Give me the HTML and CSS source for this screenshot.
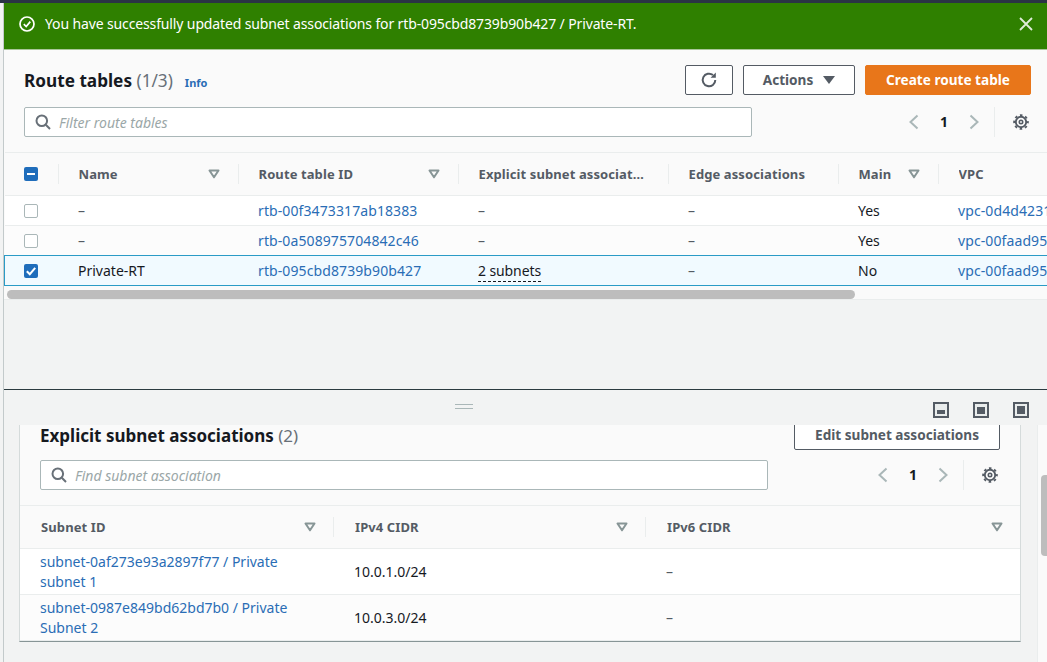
FILE: index.html
```html
<!DOCTYPE html>
<html lang="en">
<head>
  <meta charset="UTF-8" />
  <title>Route tables</title>
  <link rel="stylesheet" href="styles.css">
</head>
<body>
  <svg class="sprites" width="0" height="0">
    <symbol id="i-search" viewBox="0 0 16 16"><circle cx="6.8" cy="6.8" r="5.3" fill="none" stroke="currentColor" stroke-width="2"/><path d="M10.8 10.8 15 15" fill="none" stroke="currentColor" stroke-width="2"/></symbol>
    <symbol id="i-left" viewBox="0 0 16 16"><path d="M11.5 1.5 4.5 8l7 6.5" fill="none" stroke="currentColor" stroke-width="2"/></symbol>
    <symbol id="i-right" viewBox="0 0 16 16"><path d="M4.5 1.5 11.5 8l-7 6.5" fill="none" stroke="currentColor" stroke-width="2"/></symbol>
    <symbol id="i-gear" viewBox="0 0 16 16"><circle cx="8" cy="8" r="5.200" fill="none" stroke="currentColor" stroke-width="1.900"/><circle cx="8" cy="8" r="6.900" fill="none" stroke="currentColor" stroke-width="1.800" stroke-dasharray="2.600 2.820" stroke-dashoffset="1.300"/><circle cx="8" cy="8" r="1.700" fill="none" stroke="currentColor" stroke-width="1.600"/></symbol>
    <symbol id="i-sort" viewBox="0 0 12 10"><path d="M1.500 1.500h9L6 8.300z" fill="none" stroke="currentColor" stroke-width="2" stroke-linejoin="round"/></symbol>
  </svg>

  <div class="top-line"></div>

  <div class="app">
    <div class="flash">
      <svg class="flash-icon" width="16" height="16" viewBox="0 0 16 16"><circle cx="8" cy="8" r="7" fill="none" stroke="#fff" stroke-width="1.700"/><path d="M4.800 8.200 7.200 10.500 11.300 5.600" fill="none" stroke="#fff" stroke-width="1.700"/></svg>
      <span class="flash-text">You have successfully updated subnet associations for rtb-095cbd8739b90b427 / Private-RT.</span>
      <svg class="flash-close" width="14" height="14" viewBox="0 0 14 14"><path d="M1 1l12 12M13 1 1 13" stroke="#fff" stroke-opacity=".85" stroke-width="1.800" fill="none"/></svg>
    </div>

    <section class="upper">
      <div class="tools">
        <div class="title-row">
          <h1 class="title">Route tables <span class="count">(1/3)</span></h1>
          <a class="info">Info</a>
          <div class="actions">
            <button class="btn btn-icon">
              <svg width="18" height="18" viewBox="0 0 18 18"><path d="M15.300 9A6.300 6.300 0 1 1 13 4.100" fill="none" stroke="#545b64" stroke-width="2"/><path d="M15.800 1.500v5.200h-5.200z" fill="#545b64"/></svg>
            </button>
            <button class="btn btn-actions">Actions <span class="caret"></span></button>
            <button class="btn btn-primary">Create route table</button>
          </div>
        </div>
        <div class="filter-row">
          <div class="search search-wide">
            <svg class="search-icon" width="16" height="16"><use href="#i-search"/></svg>
            <span class="placeholder">Filter route tables</span>
          </div>
          <div class="pager">
            <svg class="chev" width="16" height="16"><use href="#i-left"/></svg>
            <span class="page">1</span>
            <svg class="chev" width="16" height="16"><use href="#i-right"/></svg>
            <span class="pager-sep"><svg class="gear" width="16" height="16"><use href="#i-gear"/></svg></span>
          </div>
        </div>
      </div>

      <table class="rt-table">
        <colgroup><col class="c-check"><col class="c-name"><col class="c-id"><col class="c-assoc"><col class="c-edge"><col class="c-main"><col class="c-vpc"></colgroup>
        <thead>
          <tr>
            <th><div class="th-in th-check"><span class="box box-on"><svg width="14" height="14" viewBox="0 0 14 14"><path d="M3 7h8" stroke="#fff" stroke-width="2"/></svg></span></div></th>
            <th><div class="th-in"><span class="th-label">Name</span><svg class="sort" width="12" height="10"><use href="#i-sort"/></svg></div></th>
            <th><div class="th-in"><span class="th-label">Route table ID</span><svg class="sort" width="12" height="10"><use href="#i-sort"/></svg></div></th>
            <th><div class="th-in th-long"><span class="th-label">Explicit subnet associations</span></div></th>
            <th><div class="th-in"><span class="th-label">Edge associations</span></div></th>
            <th><div class="th-in"><span class="th-label">Main</span><svg class="sort" width="12" height="10"><use href="#i-sort"/></svg></div></th>
            <th><div class="th-in th-last"><span class="th-label">VPC</span></div></th>
          </tr>
        </thead>
        <tbody>
          <tr>
            <td><span class="box"></span></td>
            <td class="dash">–</td>
            <td><a class="link">rtb-00f3473317ab18383</a></td>
            <td class="dash">–</td>
            <td class="dash">–</td>
            <td>Yes</td>
            <td><a class="link">vpc-0d4d42311c5e8a7f2</a></td>
          </tr>
          <tr class="alt before-selected">
            <td><span class="box"></span></td>
            <td class="dash">–</td>
            <td><a class="link">rtb-0a508975704842c46</a></td>
            <td class="dash">–</td>
            <td class="dash">–</td>
            <td>Yes</td>
            <td><a class="link">vpc-00faad95b2c1d3e47</a></td>
          </tr>
          <tr class="selected">
            <td><span class="box box-on"><svg width="14" height="14" viewBox="0 0 14 14"><path d="M2.800 7.200 5.800 10.200 11.200 3.800" fill="none" stroke="#fff" stroke-width="2"/></svg></span></td>
            <td>Private-RT</td>
            <td><a class="link">rtb-095cbd8739b90b427</a></td>
            <td><span class="popover">2 subnets</span></td>
            <td class="dash">–</td>
            <td>No</td>
            <td><a class="link">vpc-00faad95b2c1d3e47</a></td>
          </tr>
        </tbody>
      </table>
      <div class="h-track"><div class="h-thumb"></div></div>
    </section>

    <div class="upper-gap"></div>

    <section class="split">
      <div class="split-head">
        <div class="handle"></div>
        <div class="split-icons">
          <span class="pos pos-low"></span>
          <span class="pos pos-mid"></span>
          <span class="pos pos-full"></span>
        </div>
      </div>

      <div class="split-body">
        <div class="pane">
          <div class="card">
            <div class="card-title-row">
              <h2 class="card-title">Explicit subnet associations <span class="count">(2)</span></h2>
              <button class="btn btn-edit">Edit subnet associations</button>
            </div>
            <div class="filter-row card-filter">
              <div class="search search-card">
                <svg class="search-icon" width="16" height="16"><use href="#i-search"/></svg>
                <span class="placeholder">Find subnet association</span>
              </div>
              <div class="pager">
                <svg class="chev" width="16" height="16"><use href="#i-left"/></svg>
                <span class="page">1</span>
                <svg class="chev" width="16" height="16"><use href="#i-right"/></svg>
                <span class="pager-sep"><svg class="gear" width="16" height="16"><use href="#i-gear"/></svg></span>
              </div>
            </div>

            <table class="sub-table">
              <colgroup><col class="s-id"><col class="s-v4"><col class="s-v6"></colgroup>
              <thead>
                <tr>
                  <th><div class="th-in"><span class="th-label">Subnet ID</span><svg class="sort" width="12" height="10"><use href="#i-sort"/></svg></div></th>
                  <th><div class="th-in"><span class="th-label">IPv4 CIDR</span><svg class="sort" width="12" height="10"><use href="#i-sort"/></svg></div></th>
                  <th><div class="th-in th-last"><span class="th-label">IPv6 CIDR</span><svg class="sort" width="12" height="10"><use href="#i-sort"/></svg></div></th>
                </tr>
              </thead>
              <tbody>
                <tr>
                  <td><a class="link">subnet-0af273e93a2897f77 / Private subnet 1</a></td>
                  <td>10.0.1.0/24</td>
                  <td class="dash">–</td>
                </tr>
                <tr class="alt">
                  <td><a class="link">subnet-0987e849bd62bd7b0 / Private Subnet 2</a></td>
                  <td>10.0.3.0/24</td>
                  <td class="dash">–</td>
                </tr>
              </tbody>
            </table>
          </div>
        </div>
        <div class="v-track"><div class="v-thumb"></div></div>
      </div>
    </section>
  </div>
</body>
</html>
```

FILE: styles.css
```css
* {
  box-sizing: border-box;
}
html, body {
  margin: 0;
  height: 100%;
  overflow: hidden;
}
body {
  font-family: "Noto Sans", "Open Sans", sans-serif;
  font-size: 14px;
  line-height: 20px;
  color: #16191f;
  background: #f2f3f3;
}
.sprites {
  display: block;
  height: 0;
}
.top-line {
  height: 3px;
  background: #2a3345;
}
.app {
  margin-left: 3px;
  border-left: 1px solid #c3cacb;
}

/* flash bar */
.flash {
  display: flex;
  align-items: center;
  height: 47px;
  padding: 0 14px 4px 15px;
  background: #2f8000;
  border-bottom: 1px solid #a9c79a;
  color: #fff;
}
.flash-text {
  margin-left: 10px;
  flex: 1;
  letter-spacing: -.13px;
}
.flash-close {
  flex: none;
}

/* upper panel */
.upper {
  background: #fafafa;
}
.tools {
  padding: 15px 16px 15px 20px;
  height: 102px;
}
.title-row {
  display: flex;
  align-items: center;
  height: 30px;
}
.title {
  margin: 1px 0 0;
  font-size: 17.200px;
  line-height: 30px;
  font-weight: 700;
}
.count {
  color: #687078;
  font-weight: 400;
}
.info {
  margin-left: 12px;
  margin-top: 5px;
  font-size: 11px;
  font-weight: 700;
  color: #2a6db5;
}
.actions {
  margin-left: auto;
  display: flex;
  gap: 10px;
}
.btn {
  height: 30px;
  padding: 0;
  font: 700 13.600px/20px "Noto Sans", "Open Sans", sans-serif;
  color: #545b64;
  background: #fff;
  border: 1px solid #545b64;
  border-radius: 2px;
  display: flex;
  align-items: center;
  justify-content: center;
}
.btn-icon {
  width: 48px;
}
.btn-actions {
  width: 112px;
  gap: 10px;
}
.caret {
  width: 0;
  height: 0;
  border-left: 6px solid transparent;
  border-right: 6px solid transparent;
  border-top: 8px solid #545b64;
}
.btn-primary {
  width: 166px;
  background: #e8761a;
  border-color: #e8761a;
  color: #fff;
}
.filter-row {
  display: flex;
  align-items: center;
  margin-top: 12px;
  height: 30px;
}
.search {
  display: flex;
  align-items: center;
  height: 30px;
  padding-left: 10px;
  background: #fff;
  border: 1px solid #aab7b8;
  border-radius: 2px;
}
.search-wide {
  width: 728px;
}
.search-card {
  width: 728px;
}
.search-icon {
  color: #687078;
}
.placeholder {
  margin-left: 8px;
  padding-top: 1px;
  font-style: italic;
  color: #9ba7a8;
}
.pager {
  margin-left: auto;
  display: flex;
  align-items: center;
  height: 30px;
}
.chev {
  color: #aab7b8;
}
.page {
  width: 44px;
  text-align: center;
  font-weight: 700;
  color: #16191f;
}
.pager-sep {
  display: flex;
  align-items: center;
  height: 30px;
  margin-left: 12px;
  padding: 0 2px 0 18px;
  border-left: 1px solid #eaeded;
}
.gear {
  color: #545b64;
}

/* tables */
table {
  table-layout: fixed;
  border-collapse: collapse;
}
.rt-table {
  width: 1260px;
}
.c-check { width: 54px; }
.c-name { width: 180px; }
.c-id { width: 220px; }
.c-assoc { width: 210px; }
.c-edge { width: 170px; }
.c-main { width: 100px; }
.c-vpc { width: 326px; }

th {
  padding: 0;
  height: 43px;
  background: #fafafa;
  border-top: 1px solid #eaeded;
  border-bottom: 1px solid #eaeded;
  font-size: 13px;
  letter-spacing: .1px;
  font-weight: 700;
  text-align: left;
  color: #545b64;
}
.th-in {
  display: flex;
  align-items: center;
  justify-content: space-between;
  height: 20px;
  padding: 0 18px 0 20px;
  border-right: 1px solid #eaeded;
}
.th-long {
  padding-right: 22px;
}
.th-last {
  border-right: 0;
}
.th-check {
  justify-content: flex-start;
  padding-left: 19px;
}
.th-label {
  overflow: hidden;
  white-space: nowrap;
  text-overflow: ellipsis;
}
.sort {
  flex: none;
  color: #879596;
}
td {
  padding: 0 0 0 19.500px;
  height: 30px;
  background: #fff;
  border-bottom: 1px solid #eaeded;
  white-space: nowrap;
}
td:first-child {
  padding-left: 19px;
}
.alt td {
  background: #fcfcfc;
}
.dash {
  color: #545b64;
}
.link {
  color: #2a6db5;
}
.rt-table .link {
  letter-spacing: .1px;
}
.box {
  display: block;
  width: 14px;
  height: 14px;
  background: #fff;
  border: 1px solid #aab7b8;
  border-radius: 2px;
}
.box-on {
  background: #1f6dbb;
  border: 0;
}
.box-on svg {
  display: block;
}
.before-selected td {
  border-bottom-color: #2a9bc6;
}
.selected td {
  background: #f1faff;
  border-bottom: 1px solid #2a9bc6;
}
.selected td:first-child {
  border-left: 1px solid #2a9bc6;
}
.popover {
  border-bottom: 1px dashed #16191f;
  padding-bottom: 1px;
  letter-spacing: -.1px;
}
.h-track {
  height: 14px;
  padding: 4px 0 0 3px;
  background: #fafafa;
  border-bottom: 1px solid #eaeded;
}
.h-thumb {
  width: 848px;
  height: 9px;
  border-radius: 5px;
  background: #bdbdbd;
}
.upper-gap {
  height: 89px;
}

/* split panel */
.split {
  border-top: 1px solid #2b3a3f;
}
.split-head {
  display: flex;
  align-items: center;
  height: 35px;
  padding-left: 451px;
  padding-right: 18px;
  padding-bottom: 2px;
}
.handle {
  width: 18px;
  height: 5px;
  border-top: 1px solid #aab7b8;
  border-bottom: 1px solid #aab7b8;
}
.split-icons {
  margin-left: auto;
  margin-top: 7px;
  display: flex;
  gap: 24px;
}
.pos {
  display: flex;
  width: 16px;
  height: 16px;
  padding: 2px;
  border: 2px solid #545b64;
  background: #eaeded;
}
.pos::after {
  content: "";
  display: block;
  width: 100%;
  background: #545b64;
}
.pos-low {
  align-items: flex-end;
}
.pos-low::after {
  height: 4px;
}
.pos-mid {
  align-items: flex-end;
}
.pos-mid::after {
  height: 7px;
}
.pos-full::after {
  height: 100%;
}
.split-body {
  display: flex;
  height: 237px;
  overflow: hidden;
}
.pane {
  flex: 1;
  padding-left: 15px;
  padding-right: 16px;
}
.card {
  width: 1002px;
  background: #fafafa;
  border-left: 1px solid #d5dbdb;
  border-right: 1px solid #d5dbdb;
  border-bottom: 1px solid #879596;
  margin-top: 0;
}
.card-title-row {
  display: flex;
  justify-content: space-between;
  align-items: flex-start;
  height: 24px;
  padding: 0 20px;
}
.card-title {
  margin: 0;
  font-size: 17px;
  line-height: 22px;
  font-weight: 700;
}
.btn-edit {
  width: 206px;
  height: 30px;
  margin-top: -5px;
}
.card-filter {
  margin-top: 11px;
  padding: 0 22px 0 20px;
}
.card-filter .pager-sep {
  padding-right: 0;
}
.sub-table {
  width: 1000px;
  margin-top: 15px;
}
.s-id { width: 314px; }
.s-v4 { width: 312px; }
.s-v6 { width: 374px; }
.sub-table .th-in {
  padding: 0 17px 0 21px;
}
.sub-table td {
  height: 46px;
  padding-left: 20px;
  padding-right: 40px;
  white-space: normal;
}
.v-track {
  width: 10px;
  padding: 50px 0 0 3px;
  background: #fafafa;
  border-left: 1px solid #eaeded;
}
.v-thumb {
  width: 7px;
  height: 81px;
  border-radius: 4px 0 0 4px;
  background: #bdbdbd;
}
```
